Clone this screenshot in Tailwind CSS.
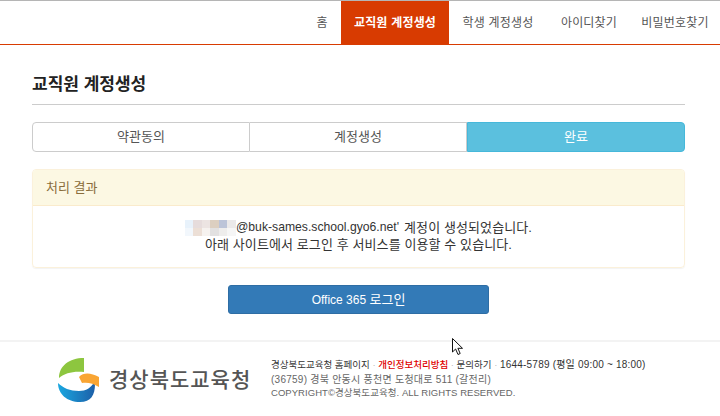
<!DOCTYPE html>
<html lang="ko">
<head>
  <meta charset="UTF-8">
  <meta name="viewport" content="width=device-width, initial-scale=1.0">
  <title>교직원 계정생성</title>
  <script src="https://cdn.jsdelivr.net/npm/@tailwindcss/browser@4"></script>
</head>
<body class="relative w-[720px] h-[416px] overflow-hidden bg-white text-[#333] font-['Liberation_Sans','Noto_Sans_CJK_KR',sans-serif]">

  <!-- 상단 메뉴 -->
  <nav class="h-[45px] border-t border-t-[#b5b5b5] border-b border-b-[#d83b01] flex justify-end text-[12px] text-[#555] tracking-[0.2px]">
    <a class="w-[50px] flex items-center justify-center pl-[12px]">홈</a>
    <a class="w-[108px] flex items-center justify-center bg-[#d83b01] text-white font-bold">교직원 계정생성</a>
    <a class="w-[98px] flex items-center justify-center">학생 계정생성</a>
    <a class="w-[84px] flex items-center justify-center">아이디찾기</a>
    <a class="w-[89px] flex items-center justify-center pr-[1px]">비밀번호찾기</a>
  </nav>

  <main class="w-[653px] ml-[32px]">
    <h2 class="mt-[29px] h-[31px] border-b border-[#ccc] text-[17px] leading-[22px] font-bold text-[#222]">교직원 계정생성</h2>

    <!-- 단계 -->
    <div class="mt-[17px] h-[30px] flex text-[13px] text-[#555]">
      <div class="w-[218px] flex items-center justify-center border border-[#ccc] rounded-l-[4px]">약관동의</div>
      <div class="w-[217px] flex items-center justify-center border border-l-0 border-[#ccc]">계정생성</div>
      <div class="w-[218px] flex items-center justify-center bg-[#5bc0de] border border-[#46b8da] rounded-r-[4px] text-white">완료</div>
    </div>

    <!-- 처리 결과 -->
    <div class="mt-[17px] h-[99px] border border-[#faebcc]/70 rounded-[4px] shadow-[0_1px_1px_rgba(0,0,0,0.05)]">
      <div class="h-[36px] px-[13px] flex items-center bg-[#fcf8e3] border-b border-[#faebcc] text-[13px] text-[#8a6d3b] rounded-t-[3px]">처리 결과</div>
      <div class="pt-[13px] text-center text-[13px] leading-[17px] text-[#333] tracking-[0.1px]">
        <p class="flex items-center justify-center h-[17px]">
          <span class="grid grid-cols-6 w-[51px] h-[16px]">
            <i class="bg-[#e8f2fb]"></i><i class="bg-[#e6dcdc]"></i><i class="bg-[#ece4e2]"></i><i class="bg-[#dccfc0]"></i><i class="bg-[#bcc4d8]"></i><i class="bg-[#ebe9e9]"></i>
            <i class="bg-[#f2f7fc]"></i><i class="bg-[#ecdfd6]"></i><i class="bg-[#f6f2ef]"></i><i class="bg-[#e2e1e1]"></i><i class="bg-[#eeedec]"></i><i class="bg-[#f6f6f6]"></i>
          </span>
          <span class="text-[12.2px] tracking-normal">@buk-sames.school.gyo6.net'</span>
          <span class="ml-[5px]">계정이 생성되었습니다.</span>
        </p>
        <p>아래 사이트에서 로그인 후 서비스를 이용할 수 있습니다.</p>
      </div>
    </div>

    <div class="mt-[17px] flex justify-center">
      <button class="w-[261px] h-[29px] bg-[#337ab7] border border-[#2e6da4] rounded-[3px] text-white text-[12px]">Office 365 <span class="text-[13px]">로그인</span></button>
    </div>
  </main>

  <!-- 푸터 -->
  <footer class="mt-[26px] h-[76px] border-t-2 border-[#f3f3f3] flex">
    <div class="w-[271px] pl-[58px] pt-[16px] flex items-start gap-[9px]">
      <svg width="42" height="44" viewBox="0 0 42 44" class="shrink-0">
        <defs>
          <linearGradient id="g1" x1="0" y1="0" x2="1" y2="0">
            <stop offset="0" stop-color="#1aa7e0"/><stop offset="1" stop-color="#1c5fa8"/>
          </linearGradient>
        </defs>
        <path d="M26 0 C11 0 1 8 1 20 C7 15 15 13 26 14 Z" fill="#8dc63f"/>
        <path d="M0 25 C0 36 9 44 22 44 C33 44 37 37 37 26 L37 23 C33 30 28 33 21 33 C12 33 5 30 0 25 Z" fill="url(#g1)"/>
        <path d="M21 19 C26 14 33 15 41 19 L41 29 C35 25 29 24 24 25 Z" fill="#f9a533"/>
      </svg>
      <span class="text-[21px] leading-[24px] mt-[10px] font-medium text-[#555] whitespace-nowrap tracking-[1px]">경상북도교육청</span>
    </div>
    <div class="pt-[15px] text-[10px] text-[#555] whitespace-nowrap">
      <p class="text-[#333] text-[9.5px] leading-[15px]">경상북도교육청 홈페이지 <span class="text-[#bbb]">·</span> <span class="text-[#e00000] font-medium">개인정보처리방침</span> <span class="text-[#bbb]">·</span> 문의하기 <span class="text-[#bbb]">·</span> <span class="text-[10px] tracking-[0.2px]">1644-5789 (평일 09:00 ~ 18:00)</span></p>
      <p class="mt-[1px] leading-[13px] tracking-[0.25px] text-[#666]">(36759) 경북 안동시 풍천면 도청대로 511 (갈전리)</p>
      <p class="leading-[14px] text-[9.5px] tracking-[0.05px] text-[#666]">COPYRIGHT©경상북도교육청. ALL RIGHTS RESERVED.</p>
    </div>
  </footer>

  <!-- 마우스 커서 -->
  <svg class="absolute left-[452px] top-[338px]" width="12" height="18" viewBox="0 0 12 18">
    <path d="M0.5 0.5 L0.5 14 L3.6 11 L6 16.5 L8.2 15.5 L5.9 10.3 L10.5 10.3 Z" fill="#fff" stroke="#111" stroke-width="1"/>
  </svg>
</body>
</html>
